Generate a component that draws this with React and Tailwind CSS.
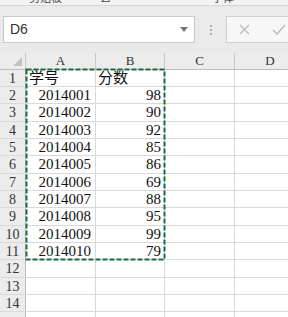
import React from "react";

const heights = [17, 17, 18, 17, 17, 18, 17, 17, 18, 17, 17, 18, 17, 17, 18];
const data = [
  ["学号", "分数"],
  ["2014001", "98"],
  ["2014002", "90"],
  ["2014003", "92"],
  ["2014004", "85"],
  ["2014005", "86"],
  ["2014006", "69"],
  ["2014007", "88"],
  ["2014008", "95"],
  ["2014009", "99"],
  ["2014010", "79"],
];

const serif = { fontFamily: '"Liberation Serif", "Noto Sans CJK SC", serif' };
const sans = { fontFamily: '"Liberation Sans", "Noto Sans CJK SC", sans-serif' };

export default function App() {
  return (
    <div className="w-[288px] h-[317px] overflow-hidden bg-white relative" style={serif}>
      {/* top strip */}
      <div className="h-[6px] bg-[#f3f3f3] border-b border-[#d6d6d6] relative overflow-hidden text-[11px] text-[#444]" style={sans}>
        <span className="absolute left-[29px] -top-[10px]">剪贴板</span>
        <span className="absolute left-[100px] -top-[10px]">⊿</span>
        <span className="absolute left-[212px] -top-[10px]">字体</span>
      </div>
      {/* formula bar */}
      <div className="h-[47px] bg-[#eaeaea] flex items-start pt-[10px] pl-[3px]">
        <div className="w-[192px] h-[27px] bg-white border border-[#c9c9c9] flex items-center pl-[6px] pr-[6px]">
          <span className="text-[14px] text-[#333] flex-1" style={sans}>D6</span>
          <svg width="8" height="5" viewBox="0 0 8 5"><path d="M0 0H8L4 5Z" fill="#777" /></svg>
        </div>
        <div className="w-[31px] h-[27px] flex flex-col items-center justify-center gap-[2px]">
          <div className="w-[2px] h-[2px] bg-[#b0b0b0]" />
          <div className="w-[2px] h-[2px] bg-[#b0b0b0]" />
          <div className="w-[2px] h-[2px] bg-[#b0b0b0]" />
        </div>
        <div className="flex-1 h-[27px] bg-[#f7f7f7] border border-[#cfcfcf] border-r-0 flex items-center pl-[12px] gap-[22px]">
          <svg width="11" height="11" viewBox="0 0 11 11"><path d="M1 1L10 10M10 1L1 10" stroke="#bdbdbd" strokeWidth="1.4" /></svg>
          <svg width="14" height="11" viewBox="0 0 14 11"><path d="M1 6L5 10L13 1" stroke="#bdbdbd" strokeWidth="1.6" fill="none" /></svg>
        </div>
      </div>
      {/* column headers */}
      <div className="flex h-[17px] bg-[#ececec] border-b border-[#bcbcbc] text-[13px] text-[#333]">
        <div className="w-[26px] shrink-0 border-r border-[#c8c8c8] relative">
          <svg className="absolute right-[3px] bottom-[3px]" width="9" height="9" viewBox="0 0 9 9"><path d="M9 0V9H0Z" fill="#c2c2c2" /></svg>
        </div>
        <div className="w-[70px] shrink-0 border-r border-[#c8c8c8] flex items-center justify-center">A</div>
        <div className="w-[69px] shrink-0 border-r border-[#c8c8c8] flex items-center justify-center">B</div>
        <div className="w-[70px] shrink-0 border-r border-[#c8c8c8] flex items-center justify-center">C</div>
        <div className="w-[70px] shrink-0 flex items-center justify-center">D</div>
      </div>
      {/* rows */}
      {heights.map((h, i) => {
        const row = data[i];
        return (
          <div key={i} className="flex border-b border-[#d9d9d9] text-[15px] text-[#111]" style={{ height: h }}>
            <div className="w-[26px] shrink-0 bg-[#ececec] border-r border-[#bcbcbc] flex items-center justify-center text-[14px] text-[#333]">{i < 14 ? i + 1 : ""}</div>
            <div className={"w-[70px] shrink-0 border-r border-[#d9d9d9] flex items-center leading-none " + (i === 0 ? "justify-start pl-[3px]" : "justify-end pr-[4px]")}>
              {row ? row[0] : ""}
            </div>
            <div className={"w-[69px] shrink-0 border-r border-[#d9d9d9] flex items-center leading-none " + (i === 0 ? "justify-start pl-[2px]" : "justify-end pr-[3px]")}>
              {row ? row[1] : ""}
            </div>
            <div className="w-[70px] shrink-0 border-r border-[#d9d9d9]" />
            <div className="w-[70px] shrink-0" />
          </div>
        );
      })}
      {/* selection marching ants */}
      <svg className="absolute left-[25px] top-[68px] pointer-events-none" width="142" height="194" viewBox="0 0 142 194">
        <rect x="1.5" y="1.5" width="138" height="190" fill="none" stroke="#1d6a40" strokeWidth="2" strokeDasharray="5 2" />
      </svg>
    </div>
  );
}
